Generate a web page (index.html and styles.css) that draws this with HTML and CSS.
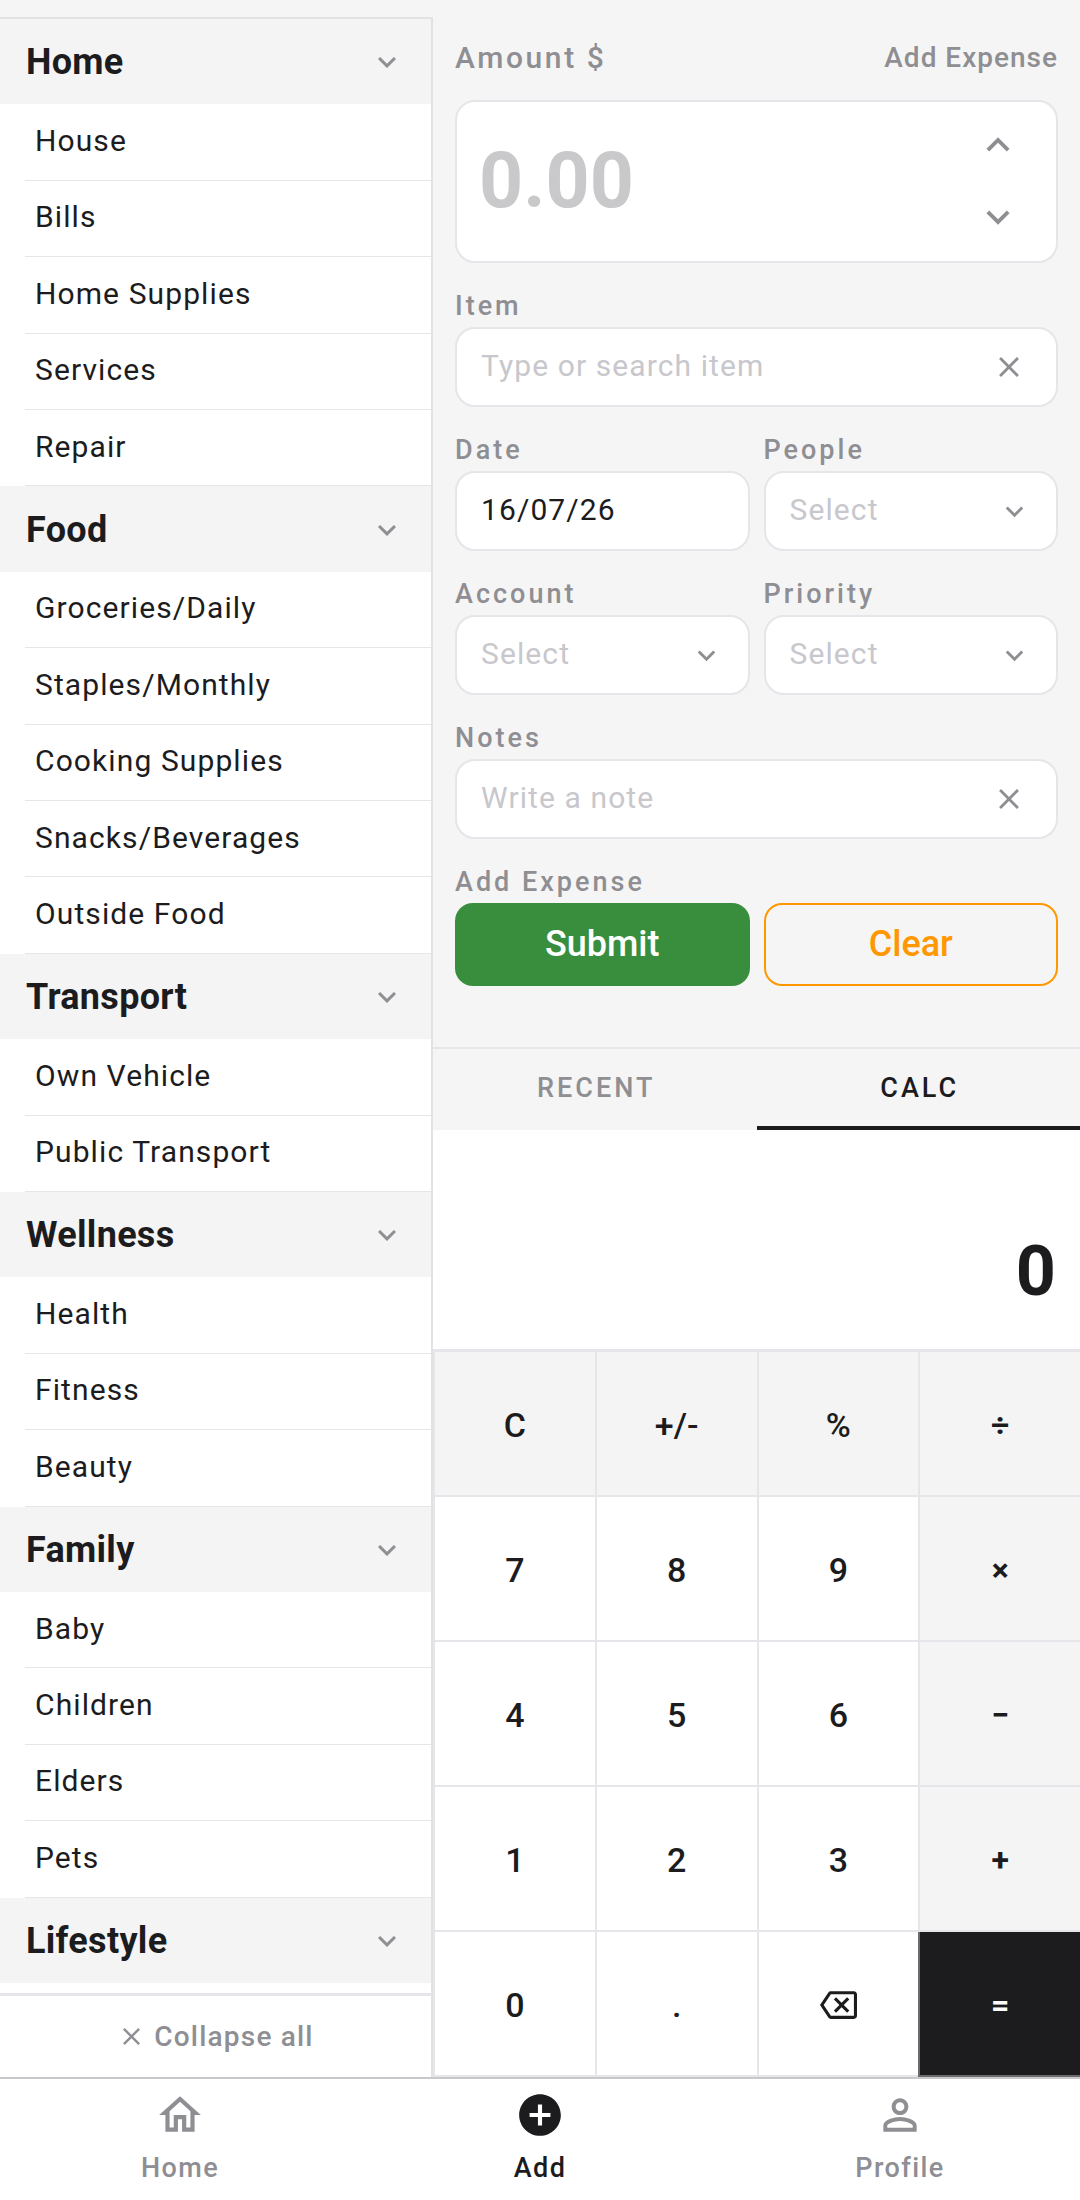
FILE: index.html
```html
<!DOCTYPE html>
<html lang="en">
<head>
    <meta charset="UTF-8">
    <meta name="viewport" content="width=device-width, initial-scale=1.0">
    <title>Add Expense</title>
    <link rel="stylesheet" href="styles.css">
</head>
<body>

<svg class="icon-defs" xmlns="http://www.w3.org/2000/svg">
    <symbol id="i-down" viewBox="0 0 24 24"><path d="M16.59 8.59L12 13.17 7.41 8.59 6 10l6 6 6-6z"/></symbol>
    <symbol id="i-up" viewBox="0 0 24 24"><path d="M12 8l-6 6 1.41 1.41L12 10.83l4.59 4.58L18 14z"/></symbol>
    <symbol id="i-close" viewBox="0 0 24 24"><path d="M19 6.41L17.59 5 12 10.59 6.41 5 5 6.41 10.59 12 5 17.59 6.41 19 12 13.41 17.59 19 19 17.59 13.41 12z"/></symbol>
</svg>

<div class="app">
    <div class="main">
        <!-- category list -->
        <aside class="side">
            <div class="cat-list">
                <div class="cat-head"><span>Home</span><svg class="chev"><use href="#i-down"/></svg></div>
                <div class="cat-item">House</div>
                <div class="cat-item">Bills</div>
                <div class="cat-item">Home Supplies</div>
                <div class="cat-item">Services</div>
                <div class="cat-item">Repair</div>
                <div class="cat-head"><span>Food</span><svg class="chev"><use href="#i-down"/></svg></div>
                <div class="cat-item">Groceries/Daily</div>
                <div class="cat-item">Staples/Monthly</div>
                <div class="cat-item">Cooking Supplies</div>
                <div class="cat-item">Snacks/Beverages</div>
                <div class="cat-item">Outside Food</div>
                <div class="cat-head"><span>Transport</span><svg class="chev"><use href="#i-down"/></svg></div>
                <div class="cat-item">Own Vehicle</div>
                <div class="cat-item">Public Transport</div>
                <div class="cat-head"><span>Wellness</span><svg class="chev"><use href="#i-down"/></svg></div>
                <div class="cat-item">Health</div>
                <div class="cat-item">Fitness</div>
                <div class="cat-item">Beauty</div>
                <div class="cat-head"><span>Family</span><svg class="chev"><use href="#i-down"/></svg></div>
                <div class="cat-item">Baby</div>
                <div class="cat-item">Children</div>
                <div class="cat-item">Elders</div>
                <div class="cat-item">Pets</div>
                <div class="cat-head"><span>Lifestyle</span><svg class="chev"><use href="#i-down"/></svg></div>
            </div>
            <div class="collapse"><svg class="collapse-x"><use href="#i-close"/></svg><span>Collapse all</span></div>
        </aside>

        <section class="right">
            <!-- expense form -->
            <form class="form">
                <div class="form-top">
                    <span class="amount-label">Amount $</span>
                    <span class="form-title">Add Expense</span>
                </div>
                <div class="amount-box">
                    <span class="amount-value">0.00</span>
                    <div class="stepper">
                        <svg class="step-icon"><use href="#i-up"/></svg>
                        <svg class="step-icon"><use href="#i-down"/></svg>
                    </div>
                </div>

                <div class="label">Item</div>
                <div class="input"><span class="ph">Type or search item</span><svg class="clear-icon"><use href="#i-close"/></svg></div>

                <div class="two">
                    <div>
                        <div class="label">Date</div>
                        <div class="input"><span class="val">16/07/26</span></div>
                    </div>
                    <div>
                        <div class="label">People</div>
                        <div class="input select"><span class="ph">Select</span><svg class="select-icon"><use href="#i-down"/></svg></div>
                    </div>
                </div>

                <div class="two">
                    <div>
                        <div class="label">Account</div>
                        <div class="input select"><span class="ph">Select</span><svg class="select-icon"><use href="#i-down"/></svg></div>
                    </div>
                    <div>
                        <div class="label">Priority</div>
                        <div class="input select"><span class="ph">Select</span><svg class="select-icon"><use href="#i-down"/></svg></div>
                    </div>
                </div>

                <div class="label">Notes</div>
                <div class="input"><span class="ph">Write a note</span><svg class="clear-icon"><use href="#i-close"/></svg></div>

                <div class="label">Add Expense</div>
                <div class="two actions">
                    <button type="button" class="btn btn-submit">Submit</button>
                    <button type="button" class="btn btn-clear">Clear</button>
                </div>
            </form>

            <div class="tabs">
                <div class="tab">RECENT</div>
                <div class="tab active">CALC</div>
            </div>

            <!-- calculator -->
            <div class="display">0</div>
            <div class="keys">
                <div class="key grey">C</div>
                <div class="key grey">+/-</div>
                <div class="key grey">%</div>
                <div class="key grey op">÷</div>
                <div class="key">7</div>
                <div class="key">8</div>
                <div class="key">9</div>
                <div class="key grey op">×</div>
                <div class="key">4</div>
                <div class="key">5</div>
                <div class="key">6</div>
                <div class="key grey op">−</div>
                <div class="key">1</div>
                <div class="key">2</div>
                <div class="key">3</div>
                <div class="key grey op">+</div>
                <div class="key">0</div>
                <div class="key">.</div>
                <div class="key">
                    <svg class="back-icon" viewBox="0 0 24 18"><path d="M22 0H7c-.69 0-1.23.35-1.59.88L0 9l5.41 8.11c.36.53.9.89 1.59.89h15c1.1 0 2-.9 2-2V2c0-1.1-.9-2-2-2zm0 16H7.07L2.4 9l4.66-7H22v14zm-11.59-2L14 10.41 17.59 14 19 12.59 15.41 9 19 5.41 17.59 4 14 7.59 10.41 4 9 5.41 12.59 9 9 12.59z"/></svg>
                </div>
                <div class="key equals op">=</div>
            </div>
        </section>
    </div>

    <nav class="nav">
        <div class="nav-item">
            <svg class="nav-icon" viewBox="0 0 24 24"><path d="M12 5.69l5 4.5V18h-2v-6H9v6H7v-7.81l5-4.5M12 3L2 12h3v8h6v-6h2v6h6v-8h3L12 3z"/></svg>
            <span>Home</span>
        </div>
        <div class="nav-item active">
            <svg class="nav-icon" viewBox="0 0 24 24"><path d="M12 2C6.48 2 2 6.48 2 12s4.48 10 10 10 10-4.48 10-10S17.52 2 12 2zm5 11h-4v4h-2v-4H7v-2h4V7h2v4h4v2z"/></svg>
            <span>Add</span>
        </div>
        <div class="nav-item">
            <svg class="nav-icon" viewBox="0 0 24 24"><path d="M12 5.9a2.1 2.1 0 1 1 0 4.2 2.1 2.1 0 0 1 0-4.2m0 9c2.97 0 6.1 1.46 6.1 2.1v1.1H5.9V17c0-.64 3.13-2.1 6.1-2.1M12 4C9.79 4 8 5.79 8 8s1.79 4 4 4 4-1.79 4-4-1.79-4-4-4zm0 9c-2.67 0-8 1.34-8 4v3h16v-3c0-2.66-5.33-4-8-4z"/></svg>
            <span>Profile</span>
        </div>
    </nav>
</div>

</body>
</html>
```

FILE: styles.css
```css
* {
    box-sizing: border-box;
}
body {
    font-family: Roboto, "Liberation Sans", sans-serif;
    background-color: #f5f5f5;
    color: #1c1c1e;
    margin: 0;
    padding: 0;
}
.icon-defs {
    display: none;
}
svg {
    fill: currentColor;
    flex: none;
}
.app {
    width: 1080px;
    height: 2200px;
    display: flex;
    flex-direction: column;
}
.main {
    height: 2077px;
    display: flex;
}

/* left column */
.side {
    width: 433px;
    margin-top: 17px;
    border-top: 2px solid #e2e2e4;
    border-right: 2px solid #e2e2e4;
    background-color: #fff;
    display: flex;
    flex-direction: column;
}
.cat-list {
    height: 1974px;
    overflow: hidden;
}
.cat-head {
    height: 85.25px;
    padding: 1px 26px 0;
    background-color: #f4f4f5;
    display: flex;
    align-items: center;
    justify-content: space-between;
    font-size: 36px;
    font-weight: 700;
    letter-spacing: 0.3px;
}
.chev {
    width: 36px;
    height: 36px;
    color: #8e8e93;
}
.cat-item {
    height: 76.45px;
    margin-left: 25px;
    padding: 0 0 3px 10px;
    border-bottom: 1px solid #e5e5ea;
    display: flex;
    align-items: center;
    font-size: 30px;
    letter-spacing: 1.1px;
}
.collapse {
    flex: 1;
    border-top: 3px solid #e5e5ea;
    display: flex;
    align-items: center;
    justify-content: center;
    gap: 8px;
    font-size: 28px;
    font-weight: 500;
    letter-spacing: 1.2px;
    color: #8e8e93;
}
.collapse-x {
    width: 29px;
    height: 29px;
}

/* right column */
.right {
    flex: 1;
    display: flex;
    flex-direction: column;
}
.form {
    height: 1047px;
    padding: 38px 22px 0;
}
.form-top {
    height: 38px;
    margin-bottom: 24px;
    display: flex;
    align-items: center;
    justify-content: space-between;
    color: #8e8e93;
    font-weight: 500;
}
.amount-label {
    font-size: 30px;
    letter-spacing: 2.6px;
}
.form-title {
    font-size: 28px;
    letter-spacing: 1px;
}
.amount-box {
    height: 163px;
    padding: 0 22px 1px;
    background-color: #fff;
    border: 2px solid #e5e5ea;
    border-radius: 20px;
    display: flex;
    align-items: center;
    justify-content: space-between;
}
.amount-value {
    font-size: 77px;
    font-weight: 700;
    color: #c9c9cb;
}
.stepper {
    display: flex;
    flex-direction: column;
    gap: 26px;
    margin-right: 13px;
    color: #8e8e93;
}
.step-icon {
    width: 46px;
    height: 46px;
    display: block;
}
.label {
    height: 22px;
    margin: 32px 0 10px;
    line-height: 22px;
    font-size: 27px;
    font-weight: 500;
    letter-spacing: 3px;
    color: #8e8e93;
}
.input {
    height: 80px;
    padding: 0 30px 0 24px;
    background-color: #fff;
    border: 2px solid #e5e5ea;
    border-radius: 20px;
    display: flex;
    align-items: center;
    justify-content: space-between;
    font-size: 30px;
    letter-spacing: 1.1px;
}
.input span {
    margin-bottom: 3px;
}
.input.select {
    padding-right: 24px;
}
.ph {
    color: #c7c7cc;
}
.clear-icon {
    width: 34px;
    height: 34px;
    color: #8e8e93;
}
.select-icon {
    width: 35px;
    height: 35px;
    color: #8e8e93;
}
.two {
    display: grid;
    grid-template-columns: 1fr 1fr;
    column-gap: 14px;
}
.btn {
    height: 83px;
    padding: 0 0 1px;
    border-radius: 18px;
    font-family: inherit;
    font-size: 36px;
    font-weight: 500;
}
.btn-submit {
    background-color: #388e3c;
    border: none;
    color: #fff;
}
.btn-clear {
    background-color: transparent;
    border: 2px solid #ff9800;
    color: #ff9800;
}

/* tabs */
.tabs {
    height: 83px;
    border-top: 2px solid #e5e5ea;
    display: flex;
}
.tab {
    flex: 1;
    padding: 0 0 4px 3px;
    display: flex;
    align-items: center;
    justify-content: center;
    font-size: 27px;
    font-weight: 500;
    letter-spacing: 3px;
    color: #8e8e93;
}
.tab.active {
    color: #1c1c1e;
    border-bottom: 4px solid #1c1c1e;
    padding-bottom: 0;
}

/* calculator */
.display {
    height: 219px;
    padding: 71px 24px 0 0;
    background-color: #fff;
    text-align: right;
    font-size: 70px;
    font-weight: 700;
    line-height: 140px;
}
.keys {
    flex: 1;
    border-top: 3px solid #e5e5ea;
    display: grid;
    grid-template-columns: repeat(4, 1fr);
    grid-template-rows: repeat(5, 1fr);
}
.key {
    padding-top: 2px;
    background-color: #fff;
    border-left: 2px solid #e5e5ea;
    border-bottom: 2px solid #e5e5ea;
    display: flex;
    align-items: center;
    justify-content: center;
    font-size: 34px;
    font-weight: 500;
}
.key.grey {
    background-color: #f4f4f5;
}
.key.op {
    font-weight: 700;
    font-size: 32px;
}
.key.equals {
    background-color: #1c1c1e;
    border-color: #6b6b6e;
    color: #fff;
}
.back-icon {
    width: 37px;
    height: 28px;
}

/* bottom nav */
.nav {
    flex: 1;
    background-color: #fff;
    border-top: 2px solid #c7c7cc;
    display: flex;
}
.nav-item {
    flex: 1;
    padding-top: 11px;
    display: flex;
    flex-direction: column;
    align-items: center;
    gap: 12px;
    font-size: 27px;
    font-weight: 500;
    letter-spacing: 1.4px;
    color: #8e8e93;
}
.nav-item.active {
    color: #1c1c1e;
}
.nav-icon {
    width: 50px;
    height: 50px;
}
```
